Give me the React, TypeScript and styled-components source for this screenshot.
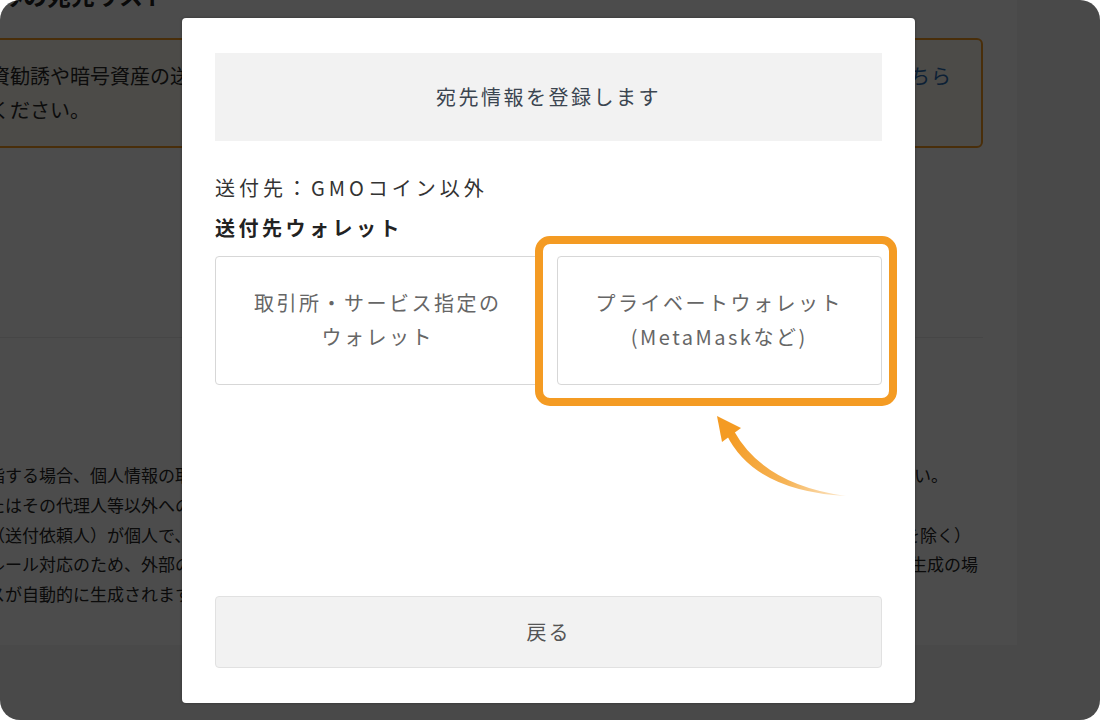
import React from 'react';
import styled, { createGlobalStyle } from 'styled-components';

const GlobalStyle = createGlobalStyle`
  html, body {
    margin: 0;
    padding: 0;
    background: #fff;
  }
  body {
    font-family: "Noto Sans CJK JP", "Noto Sans", sans-serif;
    color: #333;
  }
`;

const ORANGE = '#f49b23';

const Frame = styled.div`
  position: relative;
  width: 1100px;
  height: 720px;
  border-radius: 20px;
  overflow: hidden;
  background: #f4f4f4;
  display: flex;
  align-items: flex-start;
`;

/* ---------- page behind the dialog ---------- */

const PageCard = styled.div`
  width: 1017px;
  height: 645px;
  flex-shrink: 0;
  background: #fff;
  overflow: hidden;
  display: flex;
  flex-direction: column;
  padding-right: 34px;
  box-sizing: border-box;
`;

const PageTitle = styled.h2`
  margin: -21px 0 0 -73px;
  font-size: 24px;
  line-height: 32px;
  font-weight: 700;
  color: #222;
  white-space: nowrap;
`;

const Notice = styled.div`
  margin: 27px 0 0 -30px;
  border: 2px solid ${ORANGE};
  border-radius: 6px;
  background: #fffaf1;
  padding: 19px 29px 19px 18px;
  font-size: 20px;
  line-height: 34px;
  color: #2b2b2b;
`;

const NoticeLine = styled.div`
  display: flex;
  white-space: nowrap;
`;

const NoticeText = styled.span`
  flex: 1;
  overflow: hidden;
`;

const LinkText = styled.span`
  color: #2a6db3;
  letter-spacing: 1px;
`;

const Divider = styled.div`
  margin: 189px 0 0 -30px;
  border-top: 1px solid #ececec;
`;

const Paragraph = styled.div`
  margin: 122px 0 0 -12px;
  font-size: 17px;
  line-height: 29.75px;
  color: #262626;
`;

const ParaLine = styled.div<{ $trail: number }>`
  display: flex;
  justify-content: space-between;
  white-space: nowrap;
  padding-right: ${p => p.$trail}px;
`;

const SideArea = styled.div`
  flex: 1;
`;

/* ---------- dialog ---------- */

const Overlay = styled.div`
  position: absolute;
  inset: 0;
  background: rgba(0, 0, 0, 0.7);
  display: flex;
  align-items: center;
  justify-content: center;
  padding-right: 3px;
`;

const Modal = styled.div`
  width: 733px;
  height: 685px;
  box-sizing: border-box;
  background: #fff;
  border-radius: 4px;
  box-shadow: 0 0 3px rgba(0, 0, 0, 0.35);
  padding: 35px 33px;
  display: flex;
  flex-direction: column;
`;

const ModalHeader = styled.div`
  height: 88px;
  flex-shrink: 0;
  background: #f2f2f2;
  display: flex;
  align-items: center;
  justify-content: center;
  font-size: 20px;
  letter-spacing: 2.5px;
  color: #3b4550;
`;

const InfoText = styled.div<{ $bold?: boolean }>`
  font-size: 20px;
  line-height: 40px;
  letter-spacing: 3.5px;
  font-weight: ${p => (p.$bold ? 700 : 400)};
  color: ${p => (p.$bold ? '#222' : '#333')};
`;

const Destination = styled(InfoText)`
  margin-top: 27px;
  letter-spacing: 4px;
`;

const ChoiceRow = styled.div`
  margin-top: 8px;
  display: grid;
  grid-template-columns: 1fr 1fr;
  gap: 16px;
  height: 129px;
`;

const Choice = styled.div<{ $raised?: boolean }>`
  position: ${p => (p.$raised ? 'relative' : 'static')};
  z-index: ${p => (p.$raised ? 1 : 'auto')};
  flex: 1;
  background: #fff;
  border: 1px solid #d7d7d7;
  border-radius: 4px;
  display: flex;
  flex-direction: column;
  align-items: center;
  justify-content: center;
  font-size: 20px;
  line-height: 34px;
  letter-spacing: 2.5px;
  color: #666;
  text-align: center;
`;

const Highlighted = styled.div`
  position: relative;
  display: flex;
`;

const Ring = styled.div`
  position: absolute;
  top: -20px;
  bottom: -21px;
  left: -22px;
  right: -15px;
  border: 8px solid ${ORANGE};
  border-radius: 15px;
  background: #fff;
`;

const Pointer = styled.svg`
  position: absolute;
  left: 143px;
  top: 145px;
  z-index: 2;
`;

const Spacer = styled.div`
  flex: 1;
`;

const BackButton = styled.button`
  height: 72px;
  flex-shrink: 0;
  border: 1px solid #e1e1e1;
  border-radius: 4px;
  background: #f2f2f2;
  font-family: inherit;
  font-size: 20px;
  letter-spacing: 2px;
  color: #555;
  cursor: pointer;
`;

const PARAGRAPH: { left: string; right: string; trail: number }[] = [
  { left: '指する場合、個人情報の取扱いに関する同意が必要です。', right: 'ご確認のうえ、同意してください。', trail: 35 },
  { left: 'たはその代理人等以外への送付はお控えください。', right: '', trail: 0 },
  { left: '（送付依頼人）が個人で、受取人が法人の場合', right: '（当社が指定する法人を除く）', trail: 12 },
  { left: 'ルール対応のため、外部のウォレットアドレスが', right: 'アドレスの自動生成の場', trail: 5 },
  { left: 'スが自動的に生成されます。', right: '', trail: 0 },
];

export default function App() {
  return (
    <>
      <GlobalStyle />
      <Frame>
        <PageCard>
          <PageTitle>登録済みの宛先リスト</PageTitle>
          <Notice>
            <NoticeLine>
              <NoticeText>資勧誘や暗号資産の送付を求める詐欺にご注意ください。詳しくは</NoticeText>
              <LinkText>こちら</LinkText>
            </NoticeLine>
            <NoticeLine>ください。</NoticeLine>
          </Notice>
          <Divider />
          <Paragraph>
            {PARAGRAPH.map((line, i) => (
              <ParaLine key={i} $trail={line.trail}>
                <span>{line.left}</span>
                <span>{line.right}</span>
              </ParaLine>
            ))}
          </Paragraph>
        </PageCard>
        <SideArea />

        <Overlay>
          <Modal>
            <ModalHeader>宛先情報を登録します</ModalHeader>
            <Destination>送付先：GMOコイン以外</Destination>
            <InfoText $bold>送付先ウォレット</InfoText>
            <ChoiceRow>
              <Choice>
                <span>取引所・サービス指定の</span>
                <span>ウォレット</span>
              </Choice>
              <Highlighted>
                <Ring />
                <Choice $raised>
                  <span>プライベートウォレット</span>
                  <span>(MetaMaskなど)</span>
                </Choice>
                <Pointer width="160" height="110" viewBox="0 0 160 110">
                  <defs>
                    <linearGradient id="tail" x1="30" y1="32" x2="148" y2="95" gradientUnits="userSpaceOnUse">
                      <stop offset="0" stopColor={ORANGE} />
                      <stop offset="0.55" stopColor="#f6b457" />
                      <stop offset="1" stopColor="#fdebd2" />
                    </linearGradient>
                  </defs>
                  <path d="M26.5 33.5 Q54 90 146 95 Q64 84 34 30 Z" fill="url(#tail)" />
                  <polygon points="17,15 41,27 22,41" fill={ORANGE} />
                </Pointer>
              </Highlighted>
            </ChoiceRow>
            <Spacer />
            <BackButton>戻る</BackButton>
          </Modal>
        </Overlay>
      </Frame>
    </>
  );
}
